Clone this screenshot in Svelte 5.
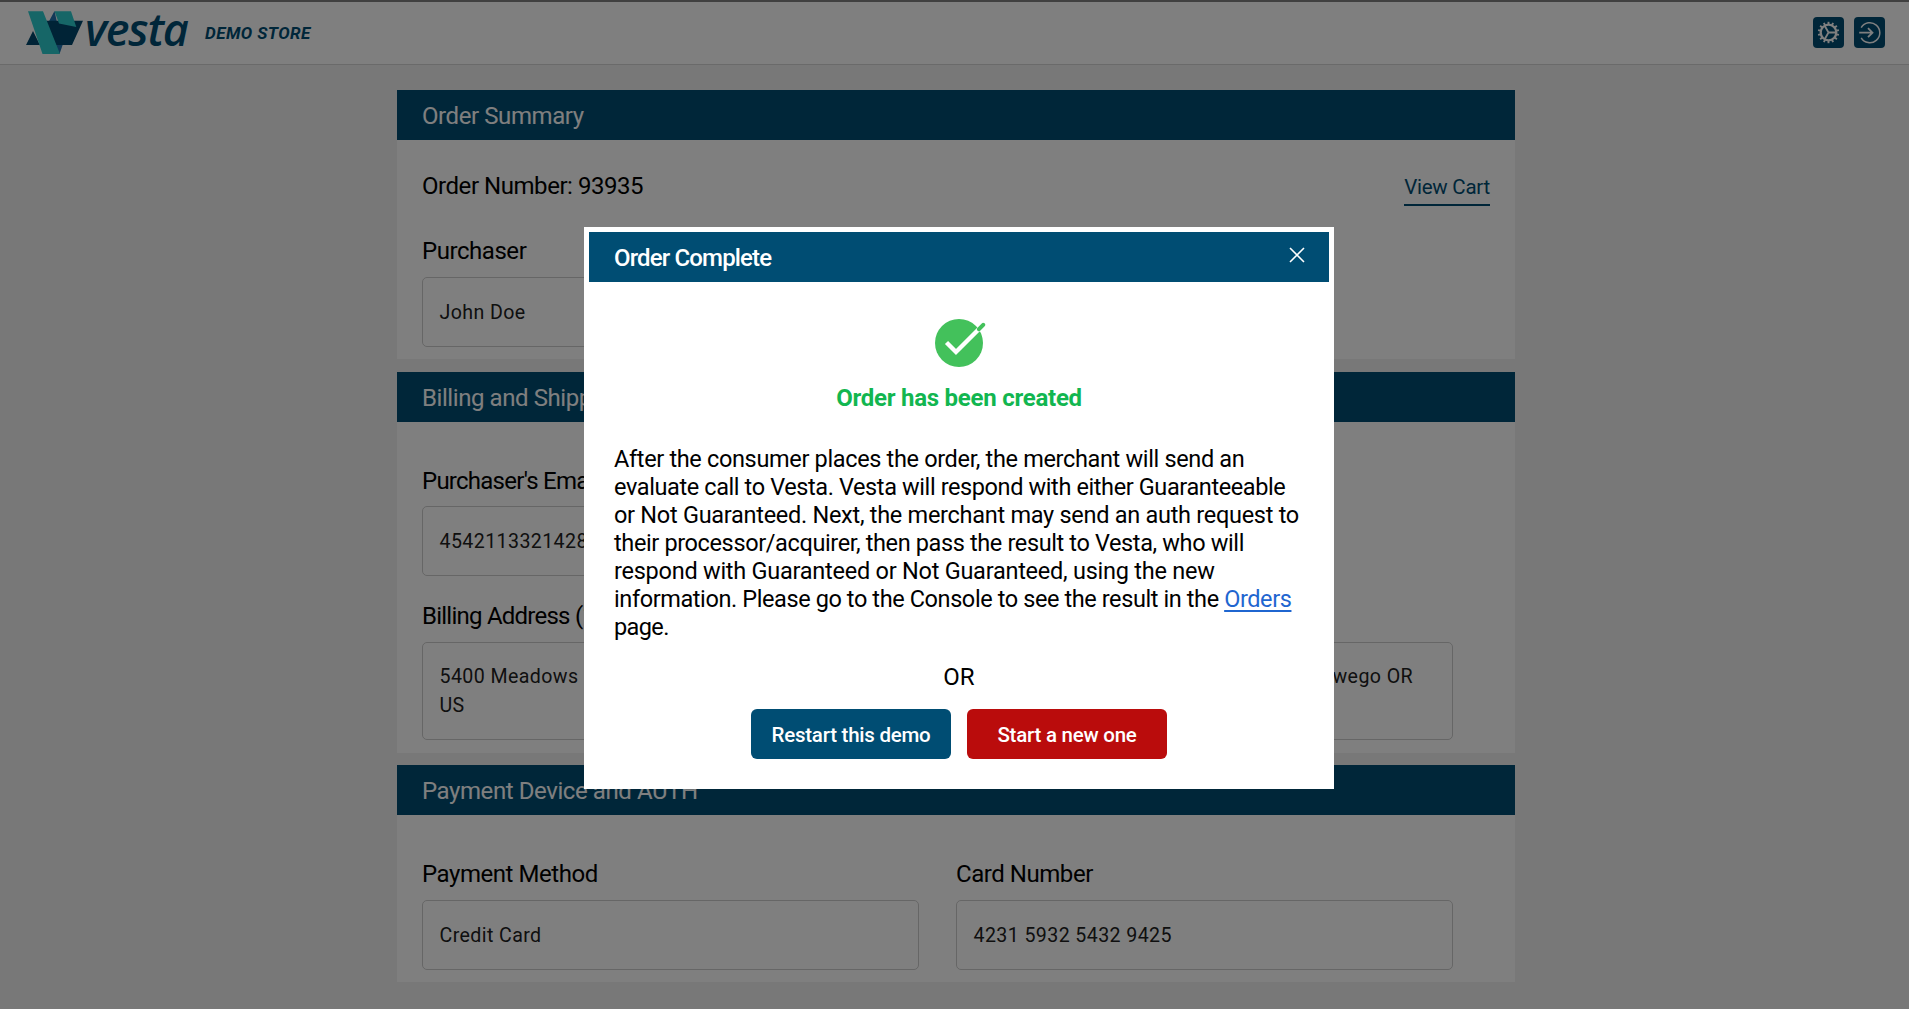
<script>
  const teeth = Array.from({ length: 14 }, (_, i) => (i * 360) / 14);
</script>

<div class="page">
  <header class="topbar">
    <div class="brand">
      <svg class="mark" viewBox="0 0 58 44" aria-hidden="true">
        <path fill="#2273b0" d="M28.5 0 21 14 32 16Z M37 33 33.5 43 27 33Z" />
        <path fill="#00476c" d="M0 34 7 20 14 34Z M20 9.8H57L46 34H28Z" />
        <path fill="#2dcccf" d="M2 .3H17L34 43H16.5Z M28.5 .3H45L50.3 16 33 12.5Z" />
      </svg>
      <span class="wordmark">vesta</span>
      <span class="store">DEMO STORE</span>
    </div>
    <nav class="actions">
      <button class="icon" aria-label="Settings">
        <svg viewBox="0 0 31 31">
          <g fill="none" stroke="#fff">
            <circle cx="15.5" cy="15.5" r="7.8" stroke-width="2.3" />
            {#each teeth as angle}
              <path d="M15.5 4.8V7.4" stroke-width="1.9" transform="rotate({angle} 15.5 15.5)" />
            {/each}
            <path d="M15.5 15.5H23M15.5 15.5 11.8 9M15.5 15.5 11.8 22" stroke-width="1.8" />
          </g>
        </svg>
      </button>
      <button class="icon" aria-label="Sign out">
        <svg viewBox="0 0 31 31">
          <g fill="none" stroke="#fff" stroke-width="1.5">
            <path d="M7.2 10.6A10 10 0 1 1 7.2 20.8" />
            <path d="M5.2 15.7H18.5M14 11.2 18.5 15.7 14 20.2" stroke-width="1.8" />
          </g>
        </svg>
      </button>
    </nav>
  </header>

  <main>
    <section class="summary">
      <h2>Order Summary</h2>
      <div class="body">
        <div class="row">
          <p class="label number">Order Number: 93935</p>
          <a class="cart" href="#cart">View Cart</a>
        </div>
        <div class="field">
          <p class="label">Purchaser</p>
          <div class="value">John Doe</div>
        </div>
      </div>
    </section>

    <section class="billing">
      <h2>Billing and Shipping</h2>
      <div class="body">
        <div class="field">
          <p class="label tight email">Purchaser's Email</p>
          <div class="value">4542113321428</div>
        </div>
        <div class="grid second">
          <div class="field">
            <p class="label tight">Billing Address (1)</p>
            <div class="value">5400 Meadows Rd Lake Oswego OR<br />US</div>
          </div>
          <div class="field">
            <p class="label">Shipping Address</p>
            <div class="value right">5400 Meadows Rd Lake Oswego OR<br />&nbsp;</div>
          </div>
        </div>
      </div>
    </section>

    <section class="payment">
      <h2>Payment Device and AUTH</h2>
      <div class="body">
        <div class="grid">
          <div class="field">
            <p class="label">Payment Method</p>
            <div class="value">Credit Card</div>
          </div>
          <div class="field">
            <p class="label">Card Number</p>
            <div class="value">4231 5932 5432 9425</div>
          </div>
        </div>
      </div>
    </section>
  </main>
</div>

<div class="overlay">
  <div class="modal" role="dialog" aria-label="Order Complete">
    <div class="modal-head">
      <h3>Order Complete</h3>
      <button class="close" aria-label="Close">
        <svg viewBox="0 0 16 16"><path d="M1 1 15 15M15 1 1 15" stroke="#fff" stroke-width="1.6" /></svg>
      </button>
    </div>
    <div class="modal-body">
      <svg class="check" viewBox="0 0 54 50" aria-hidden="true">
        <circle cx="27" cy="25" r="24" fill="#43c15b" />
        <path d="M14.5 24.5 24 34 47 11" fill="none" stroke="#fff" stroke-width="4.4" />
        <path d="M47 11.2 51.2 6.8" stroke="#43c15b" stroke-width="4" stroke-linecap="round" />
      </svg>
      <p class="created">Order has been created</p>
      <p class="text">
        <span class="l1">After the consumer places the order, the merchant will send an</span>
        <span class="l2">evaluate call to Vesta. Vesta will respond with either Guaranteeable</span>
        <span class="l3">or Not Guaranteed. Next, the merchant may send an auth request to</span>
        <span class="l4">their processor/acquirer, then pass the result to Vesta, who will</span>
        <span class="l5">respond with Guaranteed or Not Guaranteed, using the new</span>
        <span class="l6">information. Please go to the Console to see the result in the <a href="#orders">Orders</a></span>
        <span class="l7">page.</span>
      </p>
      <p class="or">OR</p>
      <div class="buttons">
        <button class="btn">Restart this demo</button>
        <button class="btn red">Start a new one</button>
      </div>
    </div>
  </div>
</div>

<style>
  :global(body) {
    margin: 0;
    overflow: hidden;
    background: #f0f0f0;
    font-family: Roboto, sans-serif;
  }
  h2, h3, p { margin: 0; font-weight: 400; }
  button { border: 0; padding: 0; font-family: inherit; }

  .page {
    box-sizing: border-box;
    height: 1009px;
    border-top: 2px solid #808080;
    background: #f0f0f0;
  }
  .topbar {
    box-sizing: border-box;
    height: 63px;
    padding: 0 24px 0 26px;
    display: flex;
    justify-content: space-between;
    background: #fff;
    border-bottom: 1px solid #d4d4d4;
  }
  .brand { display: flex; align-items: flex-start; color: #004d73; }
  .mark { width: 58px; height: 44px; margin-top: 9px; }
  .wordmark {
    width: 104px;
    height: 62px;
    margin: -4px 0 0 1px;
    font: italic 600 45px/62px "Open Sans", sans-serif;
    letter-spacing: -1.2px;
  }
  .store {
    margin-left: 16px;
    font: italic 700 17px/62px Roboto, sans-serif;
    letter-spacing: .45px;
  }
  .actions { display: flex; gap: 10px; padding-top: 15px; }
  .icon { width: 31px; height: 31px; border-radius: 4px; background: #004d73; }
  .icon svg { display: block; width: 31px; height: 31px; }

  main {
    width: 1118px;
    margin: 25px 0 0 397px;
    display: flex;
    flex-direction: column;
  }
  section { box-sizing: border-box; background: #fff; }
  .summary { height: 269px; margin-bottom: 13px; }
  .billing { height: 381px; margin-bottom: 12px; }
  .payment { height: 217px; }
  h2 {
    height: 50px;
    padding-left: 25px;
    background: #004d73;
    color: #fff;
    font-size: 24px;
    line-height: 53px;
    letter-spacing: -.42px;
  }
  .body { padding: 0 25px; }
  .row { display: flex; justify-content: space-between; padding-top: 31px; }
  .label {
    height: 30px;
    margin-bottom: 11px;
    font-size: 24px;
    line-height: 30px;
    letter-spacing: -.45px;
    color: #000;
  }
  .label.tight { letter-spacing: -.76px; }
  .label.email { line-height: 32px; }
  .number { margin: 0; }
  .cart {
    height: 33px;
    border-bottom: 2px solid #004d73;
    color: #004d73;
    font-size: 20.5px;
    line-height: 32px;
    letter-spacing: -.25px;
    text-decoration: none;
  }
  .summary .field { padding-top: 30px; }
  .billing .field { padding-top: 43px; }
  .billing .second .field { padding-top: 25px; }
  .payment .field { padding-top: 44px; }
  .grid { display: grid; grid-template-columns: 497px 497px; gap: 37px; }
  .field { width: 497px; }
  .value {
    box-sizing: border-box;
    min-height: 70px;
    padding: 20px 16px 0 16.5px;
    border: 1px solid #ccc;
    border-radius: 5px;
    color: #212121;
    font-size: 19.6px;
    line-height: 29px;
    letter-spacing: .4px;
    white-space: nowrap;
  }
  .second .value { min-height: 98px; padding-top: 19px; }
  .value.right { text-align: right; padding-right: 39px; }

  .overlay {
    position: fixed;
    inset: 0;
    background: rgba(0, 0, 0, .5);
  }
  .modal {
    position: absolute;
    left: 584px;
    top: 227px;
    box-sizing: border-box;
    width: 750px;
    height: 562px;
    border: 5px solid #fff;
    background: #fff;
  }
  .modal-head {
    height: 50px;
    padding: 0 24px 0 25px;
    display: flex;
    justify-content: space-between;
    background: #004d73;
    color: #fff;
  }
  h3 { font-size: 24px; line-height: 53px; font-weight: 500; letter-spacing: -.85px; }
  .close { width: 16px; height: 16px; margin-top: 15px; background: none; }
  .close svg { display: block; width: 16px; height: 16px; }
  .modal-body {
    padding: 36px 25px 0;
    display: flex;
    flex-direction: column;
    align-items: center;
  }
  .check { width: 54px; height: 50px; }
  .created {
    margin-top: 15px;
    color: #12b650;
    font-size: 24px;
    line-height: 30px;
    font-weight: 700;
    letter-spacing: -.25px;
  }
  .text {
    align-self: stretch;
    margin-top: 32px;
    font-size: 23.5px;
    line-height: 28px;
    color: #000;
  }
  .text span {
    display: block;
    width: max-content;
    white-space: nowrap;
    letter-spacing: -.37px;
  }
  .text .l1 { letter-spacing: -.34px; }
  .text .l2 { letter-spacing: -.39px; }
  .text .l3 { letter-spacing: -.28px; }
  .text .l5 { letter-spacing: -.25px; }
  .text .l6 { letter-spacing: -.4px; }
  .text .l7 { letter-spacing: -.6px; }
  .text a { color: #1f66d0; text-underline-offset: 3px; }
  .or { margin-top: 22px; font-size: 24px; line-height: 28px; }
  .buttons { display: flex; gap: 16px; margin-top: 18px; }
  .btn {
    width: 200px;
    height: 50px;
    padding-top: 2px;
    border-radius: 6px;
    background: #004d73;
    color: #fff;
    font-size: 20.5px;
    line-height: 48px;
    font-weight: 500;
    letter-spacing: -.25px;
  }
  .btn.red { background: #ba0c0c; }
</style>
